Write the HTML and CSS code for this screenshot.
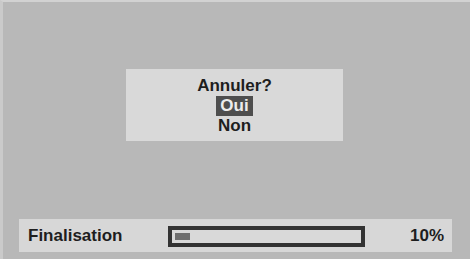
FILE: index.html
```html
<!DOCTYPE html>
<html lang="fr">
<head>
<meta charset="utf-8">
<title>Finalisation</title>
<link rel="stylesheet" href="styles.css">
</head>
<body>
<div class="screen">
  <div class="dialog">
    <div class="line">Annuler?</div>
    <div class="line"><span class="opt selected">Oui</span></div>
    <div class="line"><span class="opt">Non</span></div>
  </div>
  <div class="status">
    <div class="label">Finalisation</div>
    <div class="progress"><div class="track"><div class="fill" style="width: 8%"></div></div></div>
    <div class="spacer"></div>
    <div class="pct">10%</div>
  </div>
</div>
</body>
</html>
```

FILE: styles.css
```css
html, body {
  margin: 0;
  padding: 0;
  background: #b9b9b9;
}
.screen {
  width: 467px;
  height: 257px;
  border-top: 2px solid #d2d2d2;
  border-left: 3px solid #cacaca;
  background: #b8b8b8;
  display: flex;
  flex-direction: column;
  font-family: "Liberation Sans", Arial, sans-serif;
  font-weight: bold;
  font-size: 17px;
  color: #1e1e1e;
}
.dialog {
  margin: 67px 0 0 123px;
  width: 217px;
  height: 72px;
  box-sizing: border-box;
  padding-top: 7px;
  background: #d9d9d9;
  text-align: center;
  line-height: 20px;
}
.line {
  height: 20px;
}
.opt {
  display: inline-block;
  padding: 0 4px;
  height: 20px;
}
.selected {
  background: #4e4e4e;
  color: #ececec;
}
.status {
  margin: 78px 0 0 16px;
  width: 433px;
  height: 33px;
  box-sizing: border-box;
  padding: 0 8px 0 9px;
  background: #d7d7d7;
  display: flex;
  align-items: center;
}
.label {
  width: 140px;
}
.progress {
  width: 197px;
  height: 21px;
  box-sizing: border-box;
  border: 4px solid #333333;
  background: #d9d9d9;
  padding: 3px;
  margin-top: 1px;
}
.track {
  height: 7px;
}
.fill {
  height: 7px;
  background: #6e6e6e;
}
.spacer {
  flex: 1;
}
.pct {
  text-align: right;
}
```
